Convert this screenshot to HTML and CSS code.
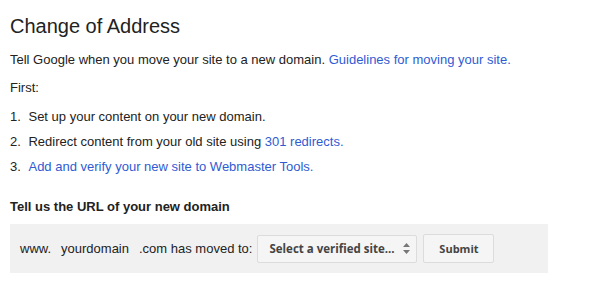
FILE: index.html
```html
<!DOCTYPE html>
<html><head><meta charset="utf-8"/>
<link rel="stylesheet" href="styles.css">
<title>Change of Address</title></head>
<body>
<section class="page">
<h1>Change of Address</h1>
<p class="intro">Tell Google when you move your site to a new domain. <a href="#">Guidelines for moving your site.</a></p>
<p>First:</p>
<ol class="steps">
<li>Set up your content on your new domain.</li>
<li>Redirect content from your old site using <a href="#">301 redirects.</a></li>
<li><a href="#">Add and verify your new site to Webmaster Tools.</a></li>
</ol>
<h3>Tell us the URL of your new domain</h3>
<div class="movebox">
<span class="www">www.</span>
<span class="dom">yourdomain</span>
<span>.com has moved to:</span>
<div class="select"><span>Select a verified site...</span>
<svg class="arrows" width="7" height="11" viewBox="0 0 7 11"><path d="M3.5 0L7 4H0z M0 7h7L3.5 11z" fill="#777"/></svg>
</div>
<div class="btn">Submit</div>
</div>
</section>
</body></html>
```
FILE: styles.css
```css
*{ padding:0; margin:0; }
body{ font-family:Arial, "Liberation Sans", sans-serif; font-size:13px; color:#222; background:#fff; }
.page{ padding:14px 10px 0 10px; width:538px; }
h1{ font-size:20px; font-weight:normal; color:#222; line-height:24px; margin-bottom:13px; }
p{ line-height:17px; margin-bottom:8px; }
p.intro{ margin-bottom:11px; }
a{ text-decoration:none; color:#2f5bd3; }
.steps{ list-style:none; counter-reset:st; margin-top:12px; }
.steps li{ counter-increment:st; line-height:17px; margin-bottom:8px; }
.steps li:before{ content:counter(st) ". "; color:#222; padding-right:4px; }
h3{ font-size:13px; font-weight:bold; color:#222; margin-top:23px; line-height:17px; }
.movebox{ background:#f1f1f1; margin-top:9px; height:49px; display:flex; align-items:center; padding-left:10px; }
.www{ margin-right:10px; }
.dom{ margin-right:10px; }
.select{ margin-left:5px; height:28px; width:160px; border:1px solid #dcdcdc; border-radius:2px; background:#f5f5f5; box-sizing:border-box; display:flex; align-items:center; justify-content:space-between; padding:0 6px 0 11px; font-family:"Open Sans", sans-serif; font-weight:bold; font-size:11.5px; color:#444; }
.btn{ margin-left:6px; height:29px; width:71px; border:1px solid #dcdcdc; border-radius:2px; background:#f5f5f5; box-sizing:border-box; display:flex; align-items:center; justify-content:center; font-family:"Open Sans", sans-serif; font-weight:bold; font-size:11px; color:#444; }
```
